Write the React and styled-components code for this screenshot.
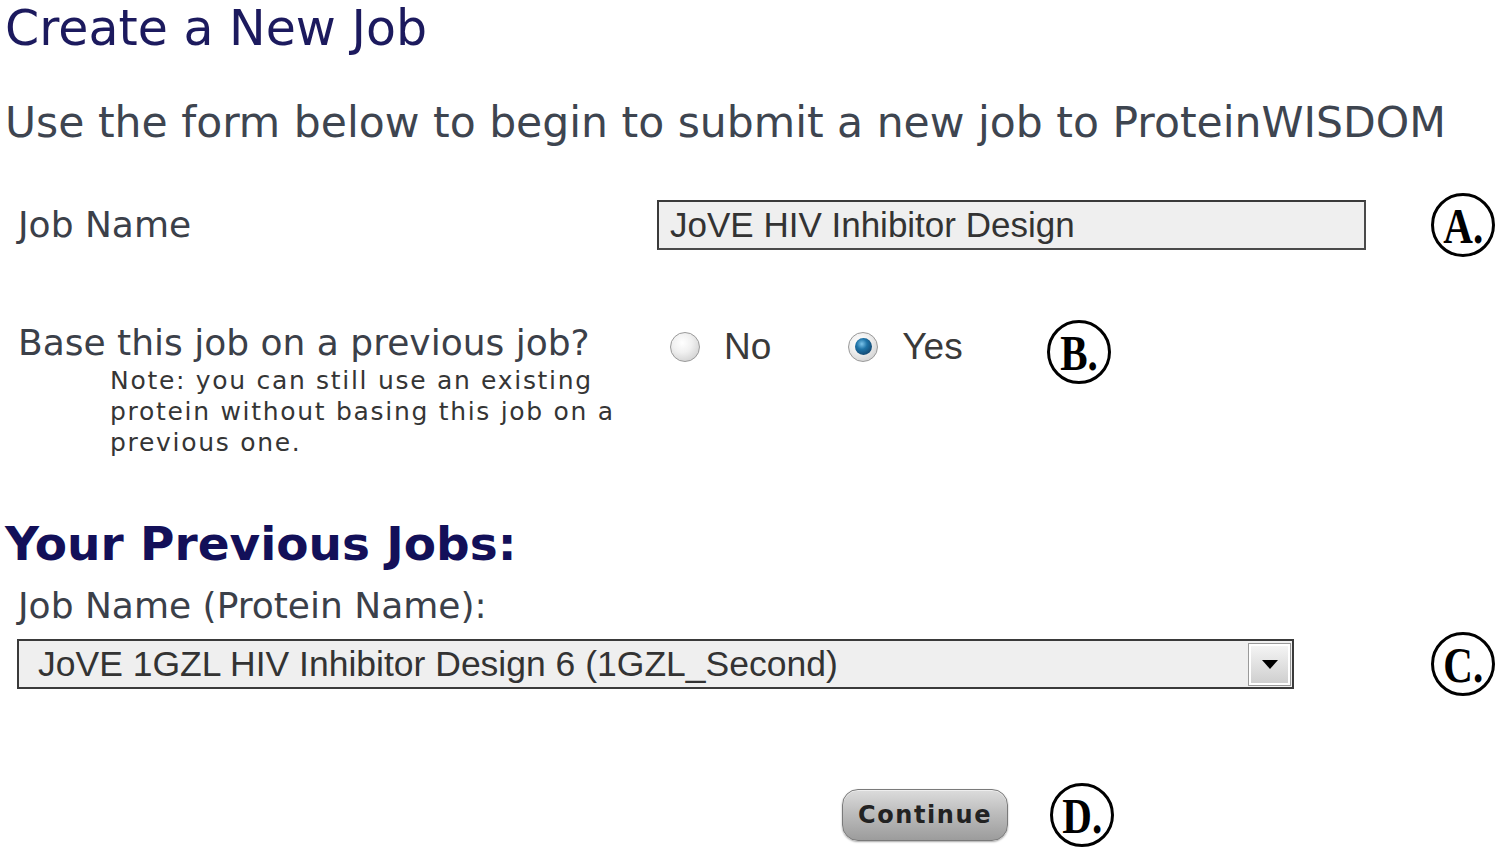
import styled, { createGlobalStyle } from 'styled-components';

const GlobalStyle = createGlobalStyle`
  body {
    margin: 0;
    background: #ffffff;
  }
`;

const Page = styled.div`
  width: 1500px;
  height: 850px;
  overflow: hidden;
  padding: 0 5px;
  box-sizing: border-box;
  font-family: "DejaVu Sans", Verdana, sans-serif;
  display: flex;
  flex-direction: column;
`;

const Title = styled.h1`
  margin: 0;
  font-size: 49px;
  line-height: 58px;
  font-weight: normal;
  color: #1c1a5e;
`;

const Intro = styled.p`
  margin: 43px 0 0;
  font-size: 42.5px;
  line-height: 43px;
  color: #3e4550;
  white-space: nowrap;
`;

const Row = styled.div`
  display: flex;
  align-items: ${(p) => p.$align || 'center'};
  margin-top: ${(p) => p.$top || 0}px;
`;

const LabelCol = styled.div`
  width: 652px;
  flex-shrink: 0;
`;

const Label = styled.div`
  padding-left: 13px;
  font-size: 36px;
  line-height: 36px;
  color: #3b4049;
  white-space: nowrap;
  margin-top: ${(p) => p.$top || 0}px;
`;

const Note = styled.div`
  margin: 4px 0 0 105px;
  font-size: 25px;
  line-height: 31px;
  letter-spacing: 1.7px;
  color: #353535;
  white-space: nowrap;
`;

const TextField = styled.input`
  width: 711px;
  height: 50px;
  box-sizing: border-box;
  border: 2px solid #4a4a4a;
  border-top-color: #3a3a3a;
  border-left-color: #3a3a3a;
  background: #efefef;
  padding: 0 11px;
  font-family: "Liberation Sans", Arial, sans-serif;
  font-size: 35px;
  color: #333333;
  outline: none;
`;

const Marker = styled.div`
  width: 64px;
  height: 64px;
  box-sizing: border-box;
  flex-shrink: 0;
  border: 3px solid #000000;
  border-radius: 50%;
  margin-left: ${(p) => p.$gap || 0}px;
  display: flex;
  align-items: center;
  justify-content: center;
  font-family: "Liberation Serif", "Times New Roman", serif;
  font-weight: bold;
  font-size: 50px;
  line-height: 1;
  color: #000000;
  background: #ffffff;
`;

const MarkerText = styled.span`
  display: inline-block;
  transform: scaleX(0.82);
  margin-top: 2px;
`;

const Choices = styled.div`
  display: flex;
  align-items: center;
  margin-left: 13px;
  margin-top: 8px;
  gap: 77px;
`;

const Choice = styled.label`
  display: flex;
  align-items: center;
  gap: 24px;
  font-family: "Liberation Sans", Arial, sans-serif;
  font-size: 37px;
  line-height: 37px;
  color: #3a3a3a;
`;

const Radio = styled.span`
  width: 30px;
  height: 30px;
  box-sizing: border-box;
  border-radius: 50%;
  border: 1px solid #9a9a9a;
  background: radial-gradient(circle at 40% 35%, #ffffff 0%, #f0f0f0 40%, #c4c4c4 100%);
  display: flex;
  align-items: center;
  justify-content: center;

  &::after {
    content: '';
    display: ${(p) => (p.$checked ? 'block' : 'none')};
    width: 17px;
    height: 17px;
    border-radius: 50%;
    background: radial-gradient(circle at 40% 35%, #7cc4ea 0%, #1f74a8 35%, #0b2f52 100%);
  }
`;

const Section = styled.h2`
  margin: 62px 0 0;
  font-size: 47px;
  line-height: 47px;
  font-weight: bold;
  color: #131059;
`;

const Select = styled.div`
  width: 1279px;
  height: 50px;
  margin-left: 12px;
  box-sizing: border-box;
  border: 2px solid #3a3a3a;
  background: #efefef;
  display: flex;
  align-items: center;
  justify-content: space-between;
  padding: 3px 2px 2px 19px;
  font-family: "Liberation Sans", Arial, sans-serif;
  font-size: 35.5px;
  color: #333333;
  white-space: nowrap;
`;

const DropButton = styled.span`
  width: 41px;
  height: 100%;
  box-sizing: border-box;
  border: 2px solid #ffffff;
  outline: 1px solid #9a9a9a;
  background: linear-gradient(#f4f4f4, #cfcfcf);
  display: flex;
  align-items: center;
  justify-content: center;

  &::after {
    content: '';
    width: 0;
    height: 0;
    border-left: 8px solid transparent;
    border-right: 8px solid transparent;
    border-top: 9px solid #000000;
  }
`;

const Actions = styled.div`
  display: flex;
  align-items: center;
  margin-top: 87px;
  padding-left: 837px;
`;

const Button = styled.button`
  width: 166px;
  height: 52px;
  border: 1px solid #7a7a7a;
  border-radius: 16px;
  background: linear-gradient(#dcdcdc 0%, #bdbdbd 45%, #9c9c9c 100%);
  box-shadow: inset 0 1px 0 #eeeeee, 0 1px 2px rgba(0, 0, 0, 0.35);
  font-family: "DejaVu Sans", Verdana, sans-serif;
  font-weight: bold;
  font-size: 24px;
  letter-spacing: 1.6px;
  color: #222222;
  padding: 0;
`;

export default function App() {
  return (
    <Page>
      <GlobalStyle />
      <Title>Create a New Job</Title>
      <Intro>Use the form below to begin to submit a new job to ProteinWISDOM</Intro>

      <Row $top={49}>
        <LabelCol>
          <Label>Job Name</Label>
        </LabelCol>
        <TextField defaultValue="JoVE HIV Inhibitor Design" readOnly />
        <Marker $gap={65}>
          <MarkerText>A.</MarkerText>
        </Marker>
      </Row>

      <Row $top={63} $align="flex-start">
        <LabelCol>
          <Label $top={5}>Base this job on a previous job?</Label>
          <Note>
            Note: you can still use an existing
            <br />
            protein without basing this job on a
            <br />
            previous one.
          </Note>
        </LabelCol>
        <Choices>
          <Choice>
            <Radio />
            No
          </Choice>
          <Choice>
            <Radio $checked />
            Yes
          </Choice>
        </Choices>
        <Marker $gap={84}>
          <MarkerText>B.</MarkerText>
        </Marker>
      </Row>

      <Section>Your Previous Jobs:</Section>
      <Label $top={21}>Job Name (Protein Name):</Label>

      <Row $top={8}>
        <Select>
          JoVE 1GZL HIV Inhibitor Design 6 (1GZL_Second)
          <DropButton />
        </Select>
        <Marker $gap={137}>
          <MarkerText>C.</MarkerText>
        </Marker>
      </Row>

      <Actions>
        <Button>Continue</Button>
        <Marker $gap={42}>
          <MarkerText>D.</MarkerText>
        </Marker>
      </Actions>
    </Page>
  );
}
